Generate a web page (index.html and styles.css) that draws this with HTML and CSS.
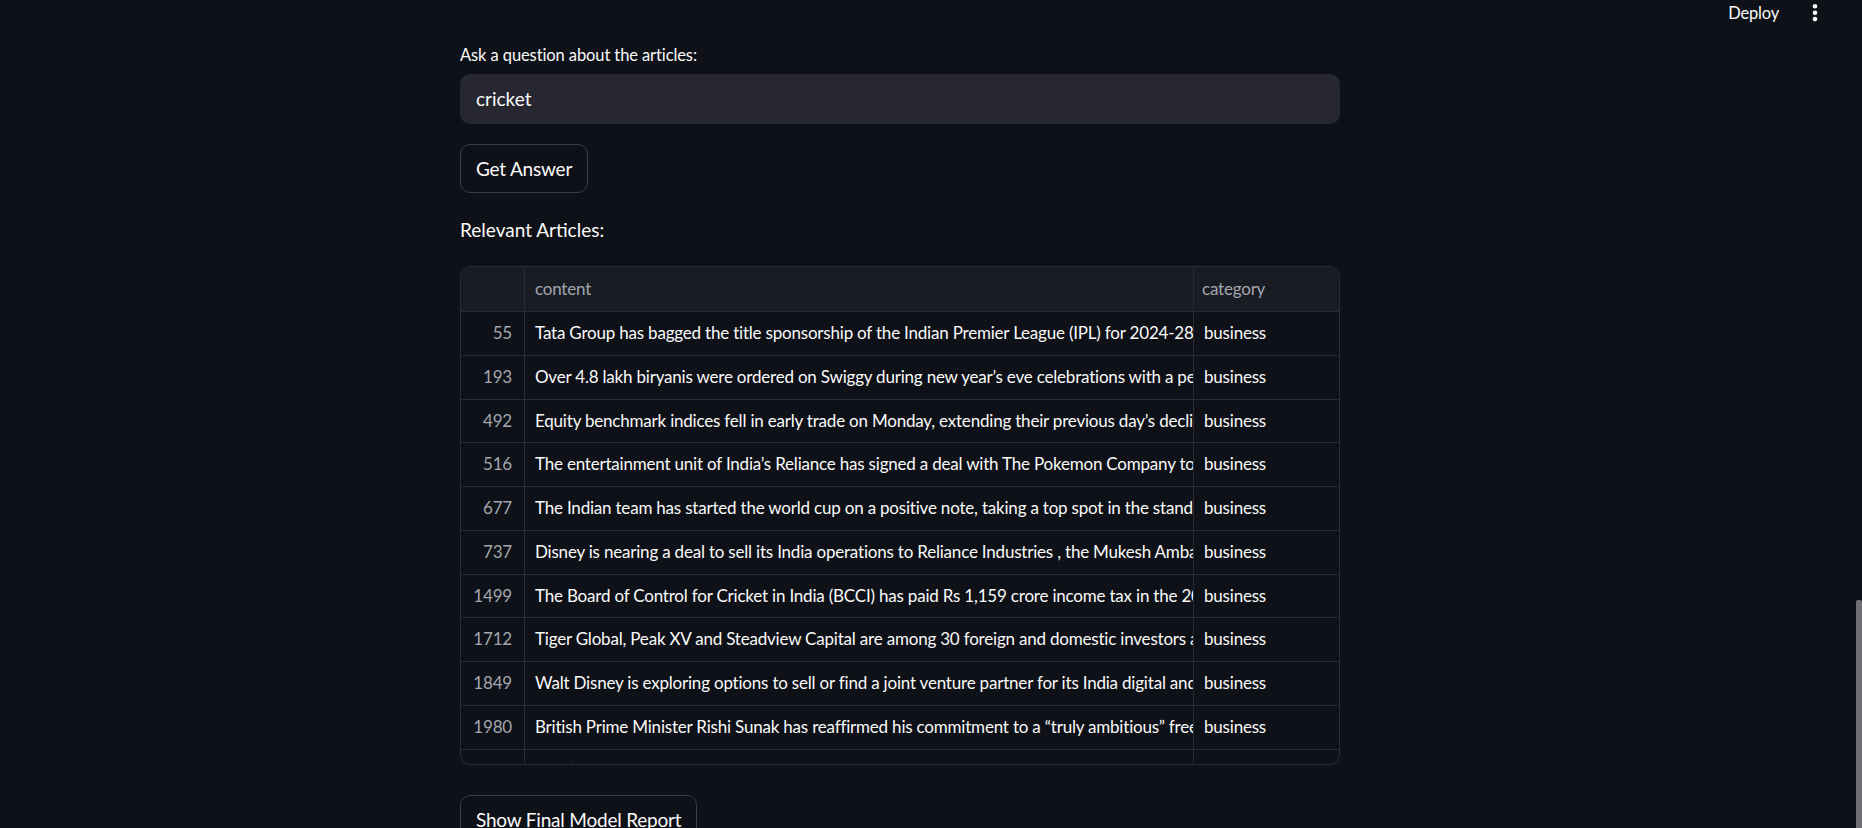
FILE: index.html
```html
<!DOCTYPE html>
<html lang="en">
<head>
<meta charset="utf-8">
<title>News Articles Q&amp;A</title>
<link rel="stylesheet" href="styles.css">
</head>
<body>
<header class="topbar">
  <span class="deploy">Deploy</span>
  <svg class="menu" width="6" height="26" viewBox="0 0 6 26" aria-hidden="true">
    <circle cx="3" cy="6.3" r="2.3" fill="#fafafa"/>
    <circle cx="3" cy="12.7" r="2.3" fill="#fafafa"/>
    <circle cx="3" cy="19.1" r="2.3" fill="#fafafa"/>
  </svg>
</header>
<main class="main">
  <div class="block">
    <label class="label">Ask a question about the articles:</label>
    <div class="input">cricket</div>
    <button class="btn">Get Answer</button>
    <p class="heading">Relevant Articles:</p>
    <div class="grid">
      <div class="row head">
        <div class="cell idx"></div>
        <div class="cell txt">content</div>
        <div class="cell cat">category</div>
      </div>
      <div class="row"><div class="cell idx">55</div><div class="cell txt">Tata Group has bagged the title sponsorship of the Indian Premier League (IPL) for 2024-28 season in a record deal</div><div class="cell cat">business</div></div>
      <div class="row"><div class="cell idx">193</div><div class="cell txt">Over 4.8 lakh biryanis were ordered on Swiggy during new year’s eve celebrations with a peak of orders</div><div class="cell cat">business</div></div>
      <div class="row"><div class="cell idx">492</div><div class="cell txt">Equity benchmark indices fell in early trade on Monday, extending their previous day’s decline amid selling</div><div class="cell cat">business</div></div>
      <div class="row"><div class="cell idx">516</div><div class="cell txt">The entertainment unit of India’s Reliance has signed a deal with The Pokemon Company to stream</div><div class="cell cat">business</div></div>
      <div class="row"><div class="cell idx">677</div><div class="cell txt">The Indian team has started the world cup on a positive note, taking a top spot in the standings</div><div class="cell cat">business</div></div>
      <div class="row"><div class="cell idx">737</div><div class="cell txt">Disney is nearing a deal to sell its India operations to Reliance Industries , the Mukesh Ambani-led group</div><div class="cell cat">business</div></div>
      <div class="row"><div class="cell idx">1499</div><div class="cell txt">The Board of Control for Cricket in India (BCCI) has paid Rs 1,159 crore income tax in the 2021-22 fiscal</div><div class="cell cat">business</div></div>
      <div class="row"><div class="cell idx">1712</div><div class="cell txt">Tiger Global, Peak XV and Steadview Capital are among 30 foreign and domestic investors at the</div><div class="cell cat">business</div></div>
      <div class="row"><div class="cell idx">1849</div><div class="cell txt">Walt Disney is exploring options to sell or find a joint venture partner for its India digital and TV business</div><div class="cell cat">business</div></div>
      <div class="row"><div class="cell idx">1980</div><div class="cell txt">British Prime Minister Rishi Sunak has reaffirmed his commitment to a “truly ambitious” free trade agreement</div><div class="cell cat">business</div></div>
      <div class="row"><div class="cell idx">2011</div><div class="cell txt">India’s retail unit of Adani Group and Reliance have been in the talks about the deal with the cricket board</div><div class="cell cat">business</div></div>
    </div>
    <button class="btn">Show Final Model Report</button>
  </div>
</main>
<div class="scrollthumb"></div>
</body>
</html>
```
FILE: styles.css
```css
html, body {
  margin: 0;
  padding: 0;
  background: #0e1117;
  color: #fafafa;
  font-family: "Lato", "Noto Sans", sans-serif;
  overflow: hidden;
  height: 828px;
}

.topbar {
  height: 26px;
  display: flex;
  justify-content: flex-end;
  align-items: center;
  gap: 33px;
  padding-right: 44px;
}

.deploy {
  font-size: 16.5px;
  letter-spacing: -0.2px;
  line-height: 26px;
  color: #fafafa;
}

.menu {
  display: block;
}

.main {
  display: flex;
  justify-content: center;
  padding-right: 62px;
  padding-top: 15px;
}

.block {
  width: 880px;
  display: flex;
  flex-direction: column;
  align-items: flex-start;
}

.label {
  font-size: 16.5px;
  letter-spacing: -0.1px;
  line-height: 28px;
  margin-bottom: 5px;
}

.input {
  align-self: stretch;
  height: 50px;
  box-sizing: border-box;
  background: #262730;
  border-radius: 10px;
  padding: 0 16px;
  font-size: 19px;
  line-height: 50px;
}

.btn {
  margin-top: 20px;
  height: 49px;
  box-sizing: border-box;
  padding: 0 15px;
  background: #0e1117;
  color: #fafafa;
  border: 1px solid #3c3e46;
  border-radius: 10px;
  font-family: inherit;
  font-size: 19px;
  letter-spacing: -0.2px;
  line-height: 47px;
}

.heading {
  margin: 21px 0 20px;
  font-size: 19px;
  line-height: 32px;
}

.grid {
  align-self: stretch;
  height: 499px;
  box-sizing: border-box;
  border: 1px solid #2a2c33;
  border-radius: 10px;
  overflow: hidden;
  margin-bottom: 10px;
}

.row {
  display: grid;
  grid-template-columns: 64px 669px 1fr;
  height: 43.75px;
  box-sizing: border-box;
  border-bottom: 1px solid #2a2c33;
  font-size: 17px;
  letter-spacing: -0.2px;
  line-height: 42.75px;
}

.row.head {
  height: 45px;
  line-height: 44px;
  background: #1a1c24;
  color: #a3a6ae;
}

.cell {
  white-space: nowrap;
  overflow: hidden;
  border-right: 1px solid #2a2c33;
}

.cell.cat {
  border-right: none;
  padding-left: 10px;
}

.head .cell.cat {
  padding-left: 8px;
}

.cell.idx {
  text-align: right;
  padding-right: 12px;
  color: #a3a6ae;
}

.cell.txt {
  padding-left: 10px;
}

.scrollthumb {
  position: fixed;
  right: 0;
  top: 600px;
  width: 6px;
  height: 228px;
  background: #6e6f73;
  border-radius: 2px 2px 0 0;
}
```
